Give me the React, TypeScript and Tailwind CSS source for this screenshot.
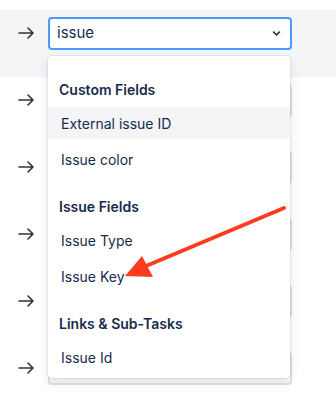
const ROWS = 6;

type Group = { label: string; items: string[] };

const GROUPS: Group[] = [
  { label: 'Custom Fields', items: ['External issue ID', 'Issue color'] },
  { label: 'Issue Fields', items: ['Issue Type', 'Issue Key'] },
  { label: 'Links & Sub-Tasks', items: ['Issue Id'] },
];

function ArrowIcon() {
  return (
    <svg width="16" height="12" viewBox="0 0 16 12" fill="none" stroke="#333" strokeWidth="1.6" strokeLinecap="round" strokeLinejoin="round">
      <path d="M1 6h14M10 1l5 5-5 5" />
    </svg>
  );
}

function Chevron() {
  return (
    <svg width="9" height="6" viewBox="0 0 9 6" fill="#333">
      <path d="M0.6 1.2 L1.8 0 L4.5 2.7 L7.2 0 L8.4 1.2 L4.5 5.1 Z" />
    </svg>
  );
}

export default function App() {
  return (
    <div className="relative w-[336px] h-[401px] bg-white overflow-hidden pt-[10px] font-['Inter','Liberation_Sans',sans-serif] text-[#172b4d]">
      {Array.from({ length: ROWS }).map((_, i) => (
        <div key={i} className={`flex items-start h-[67px] pt-[7px] ${i === 0 ? 'bg-[#f4f5f7]' : ''}`}>
          <div className="w-[48px] h-[32px] flex items-center pl-[18px]">
            <ArrowIcon />
          </div>
          {i === 0 ? (
            <div className="w-[244px] h-[33px] rounded-[4px] border-2 border-[#4c9aff] bg-white flex items-center justify-between pl-[7px] pr-[9px]">
              <span className="text-[15px]">issue</span>
              <Chevron />
            </div>
          ) : (
            <div className="w-[244px] h-[33px] rounded-[4px] border-2 border-[#dfe1e6] bg-[#fafbfc]" />
          )}
        </div>
      ))}

      <div className="absolute left-[48px] top-[56px] w-[242px] rounded-[4px] bg-white pt-[2px] pb-[5px] shadow-[0_0_0_1px_rgba(9,30,66,0.06),0_4px_11px_rgba(9,30,66,0.12)]">
        {GROUPS.map((g) => (
          <div key={g.label} className="pt-[21px]">
            <div className="h-5 flex items-center pl-[11px] text-[14px] font-semibold">{g.label}</div>
            <div className="mt-2 flex flex-col gap-1">
              {g.items.map((item, idx) => (
                <div
                  key={item}
                  className={`h-8 flex items-center pl-[13px] text-[14px] ${g.label === 'Custom Fields' && idx === 0 ? 'bg-[#f4f5f7]' : ''}`}
                >
                  {item}
                </div>
              ))}
            </div>
          </div>
        ))}
      </div>

      <svg className="absolute left-0 top-0" width="336" height="401" viewBox="0 0 336 401">
        <line x1="284" y1="208" x2="146" y2="266" stroke="#ff3b1f" strokeWidth="4" strokeLinecap="round" />
        <polygon points="125,276 142,256 153,277" fill="#ff3b1f" />
      </svg>
    </div>
  );
}
